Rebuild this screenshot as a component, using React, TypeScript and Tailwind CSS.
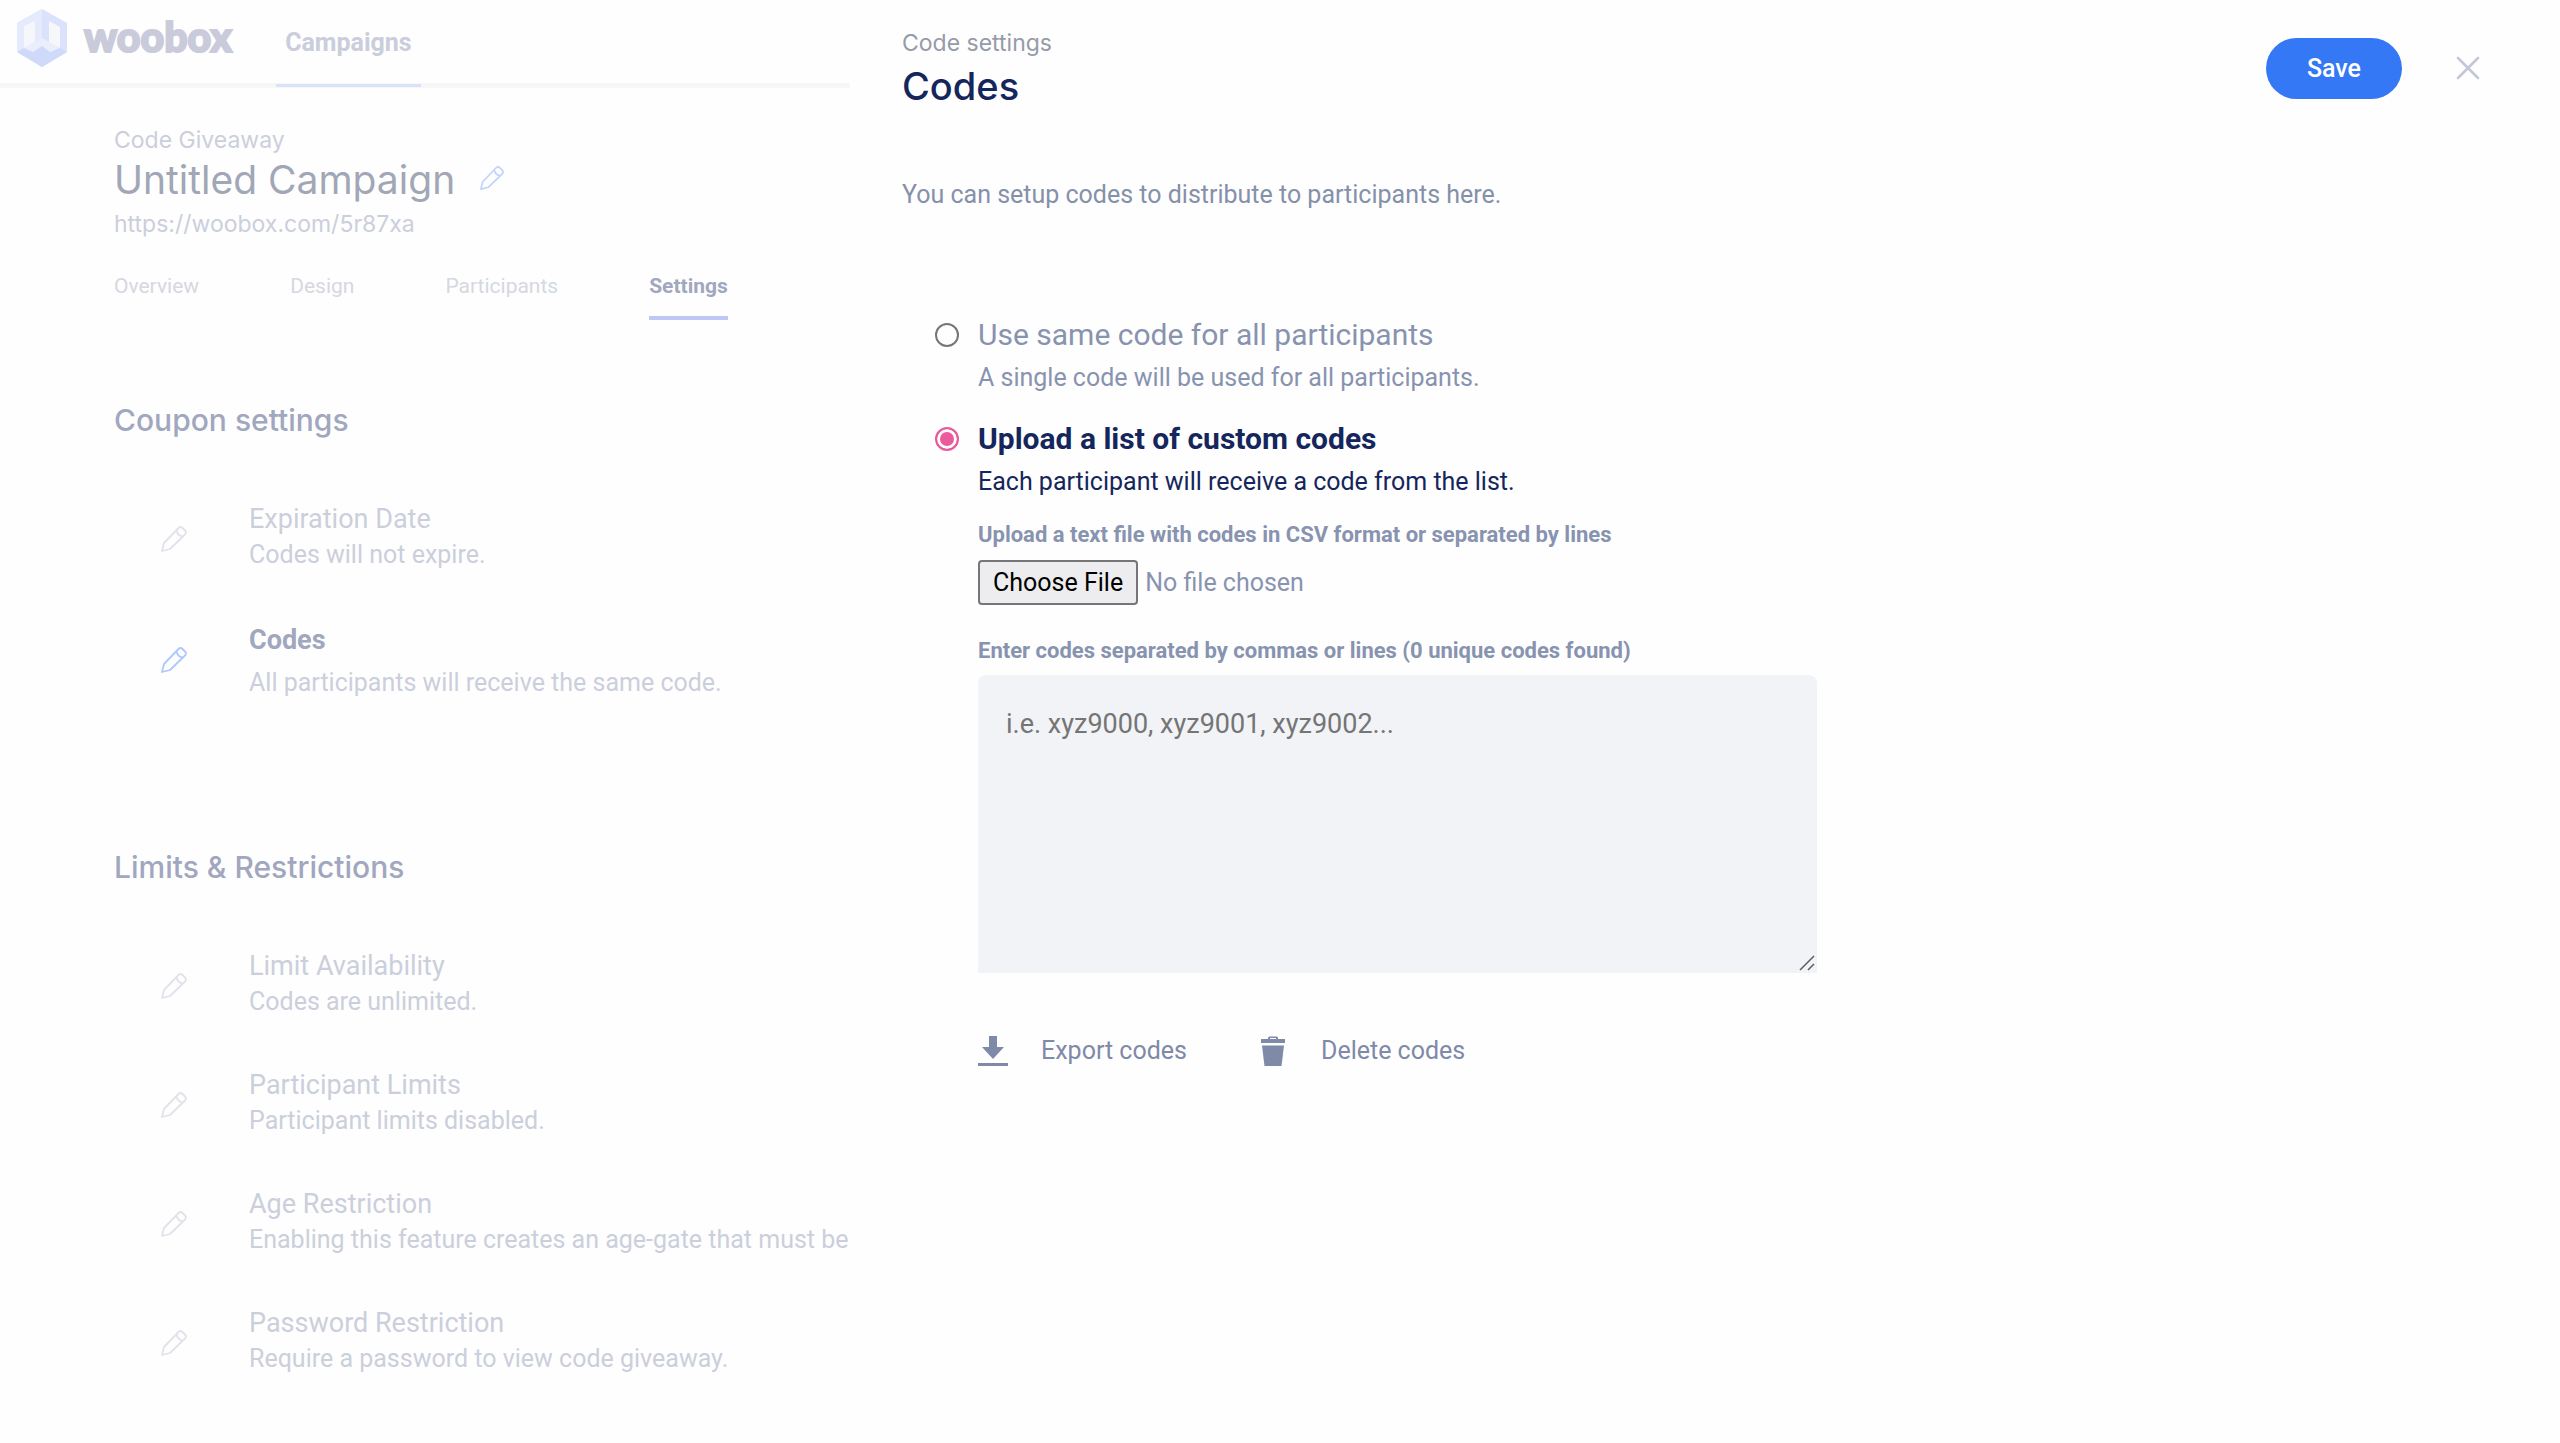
import { useState } from "react";

type Setting = { title: string; text: string; active?: boolean };

const display = "font-['Inter','Liberation_Sans',sans-serif]";

function Pencil({ className }: { className: string }) {
  return (
    <svg viewBox="0 0 28 28" fill="none" stroke="currentColor" strokeWidth="1.8" strokeLinejoin="round" className={className}>
      <path d="M2 26 L4 18 L18.500 3 Q20.500 1 22.500 3 L25 5.500 Q27 7.500 25 9.500 L10 24 Z" />
      <path d="M16.500 5.500 Q17.500 10.500 22.500 11.500" />
    </svg>
  );
}

function LogoMark() {
  return (
    <svg viewBox="0 0 50 58" className="h-[58px] w-[50px] shrink-0" aria-hidden="true">
      <path d="M25 0 L50 14 V43 L25 58 L0 43 V14 Z" fill="#dbe2fc" />
      <path d="M25 0 V29 L0 43 V14 Z" fill="#e5eafc" />
      <path d="M0 43 L7 39 L25 36 L43 39 L50 43 L25 58 Z" fill="#cfdafb" />
      <path d="M7 17 L18 12 V33 L7 39 Z M32 12 L43 18 V39 L32 33 Z" fill="#f6f7fb" />
      <path d="M7 39 L25 29 L43 39 L33 43 L25 37 L16 43 Z" fill="#ebeefb" />
    </svg>
  );
}

function SettingRow({ title, text, active }: Setting) {
  return (
    <li className="flex h-[119px] items-center">
      <button type="button" aria-label={"Edit " + title} className={active ? "pt-1 text-[#adc8fd]" : "text-[#e1e2ea]"}>
        <Pencil className="size-7" />
      </button>
      <div className={`ml-[61px] min-w-0 whitespace-nowrap ${active ? "pt-1" : "pb-1"}`}>
        <h3 className={active ? "mb-1 text-[27px] leading-[42px] font-bold text-[#a0a7bf]" : "text-[27px] leading-9 text-[#cbcfdc]"}>{title}</h3>
        <p className="text-[25px] leading-9 text-[#cbcfdc]">{text}</p>
      </div>
    </li>
  );
}

function Section({ title, items, className }: { title: string; items: Setting[]; className: string }) {
  return (
    <section className={className}>
      <h2 className={`${display} text-[30px] leading-10 font-medium text-[#a0a7bf]`}>{title}</h2>
      <ul className="mt-[39px] pl-[46px]">
        {items.map((item) => (
          <SettingRow key={item.title} {...item} />
        ))}
      </ul>
    </section>
  );
}

const coupon: Setting[] = [
  { title: "Expiration Date", text: "Codes will not expire." },
  { title: "Codes", text: "All participants will receive the same code.", active: true },
];

const limits: Setting[] = [
  { title: "Limit Availability", text: "Codes are unlimited." },
  { title: "Participant Limits", text: "Participant limits disabled." },
  { title: "Age Restriction", text: "Enabling this feature creates an age-gate that must be" },
  { title: "Password Restriction", text: "Require a password to view code giveaway." },
];

const tabs = ["Overview", "Design", "Participants"];

function Background() {
  return (
    <div className="w-[850px] shrink-0">
      <header className="flex h-[88px] border-b-[5px] border-[#f7f7f8]">
        <a href="#home" className="flex items-start pt-[9px] pl-[17px]">
          <LogoMark />
          <span className="ml-[17px] font-['Lato',sans-serif] text-[41px] leading-[56px] font-black text-[#cacbda] [-webkit-text-stroke:2px_#cacbda]">woobox</span>
        </a>
        <nav className="ml-[44px] h-[87px]">
          <a href="#campaigns" className="block h-[87px] border-b-[3px] border-[#dae1fd] px-[9px] text-[25px] leading-[86px] font-bold text-[#cacddb]">
            Campaigns
          </a>
        </nav>
      </header>
      <main className="pt-[34px] pl-[114px]">
        <p className={`${display} text-[23px] leading-9 text-[#cbcfdc]`}>Code Giveaway</p>
        <div className="flex h-11 items-center">
          <h1 className={`${display} text-[39px] leading-11 text-[#a1a7b6]`}>Untitled Campaign</h1>
          <button type="button" aria-label="Edit campaign name" className="ml-6 pb-1 text-[#c0d2fd]">
            <Pencil className="size-[26px]" />
          </button>
        </div>
        <p className={`${display} mt-1 text-[23px] leading-9 text-[#cbcfdc]`}>https://woobox.com/5r87xa</p>
        <nav className="mt-[22px] flex gap-[91px] text-[21px] leading-11 text-[#d5d8e0]">
          {tabs.map((t) => (
            <a key={t} href={"#" + t.toLowerCase()}>{t}</a>
          ))}
          <a href="#settings" className="h-14 border-b-[4px] border-[#bfc7f6] font-bold text-[#a0a7bf]">Settings</a>
        </nav>
        <Section title="Coupon settings" items={coupon} className="mt-20" />
        <Section title="Limits & Restrictions" items={limits} className="mt-[130px]" />
      </main>
    </div>
  );
}

function Choice({ id, checked, title, text, onChange }: { id: string; checked: boolean; title: string; text: string; onChange: () => void }) {
  return (
    <div className="flex h-[104px]">
      <input
        type="radio"
        name="mode"
        id={id}
        checked={checked}
        onChange={onChange}
        className={`mt-2 size-6 shrink-0 appearance-none rounded-full border-2 ${checked ? "border-[#ea5a9c] bg-[#ea5a9c] shadow-[inset_0_0_0_3px_#fdfdfe]" : "border-[#767676]"}`}
      />
      <label htmlFor={id} className={`ml-[19px] ${checked ? "text-[#15265c]" : "text-[#8893b0]"}`}>
        <span className={`block text-[30px] leading-10 ${checked ? "font-bold" : ""}`}>{title}</span>
        <span className="mt-[5px] block text-[25px] leading-9">{text}</span>
      </label>
    </div>
  );
}

export default function App() {
  const [mode, setMode] = useState("list");
  const [codes, setCodes] = useState("");
  return (
    <div className="flex min-h-screen overflow-hidden bg-[#fefefe] font-['Roboto','Liberation_Sans',sans-serif]">
      <Background />
      <aside className="min-w-0 flex-1 pl-[52px]">
        <header className="flex items-start justify-between pr-20">
          <div className={`${display} pt-[25px]`}>
            <p className="text-[23px] leading-9 text-[#959ba8]">Code settings</p>
            <h2 className="text-[38px] leading-[50px] font-medium text-[#15265c]">Codes</h2>
          </div>
          <div className="flex items-center gap-[54px] pt-[38px]">
            <button type="button" className="h-[61px] rounded-full bg-[#3478f6] px-[41px] text-[25px] font-medium text-white">Save</button>
            <button type="button" aria-label="Close" className="pb-0.5 text-[#c3c7d6]">
              <svg viewBox="0 0 24 24" className="size-6" fill="none" stroke="currentColor" strokeWidth="2.5" strokeLinecap="round">
                <path d="M2 2 L22 22 M22 2 L2 22" />
              </svg>
            </button>
          </div>
        </header>
        <p className="mt-[66px] text-[25px] leading-9 text-[#8590aa]">You can setup codes to distribute to participants here.</p>
        <form className="mt-[102px] max-w-[915px] pl-[33px]" onSubmit={(e) => e.preventDefault()}>
          <Choice id="same" checked={mode === "same"} onChange={() => setMode("same")} title="Use same code for all participants" text="A single code will be used for all participants." />
          <Choice id="list" checked={mode === "list"} onChange={() => setMode("list")} title="Upload a list of custom codes" text="Each participant will receive a code from the list." />
          <div className="pl-[43px]">
            <label htmlFor="file" className="block text-[22px] leading-6 font-bold text-[#8893b0]">Upload a text file with codes in CSV format or separated by lines</label>
            <input
              id="file"
              type="file"
              className="mt-[13px] block text-[25px] leading-9 text-[#8893b0] file:mr-[7px] file:h-[45px] file:rounded-[4px] file:border-2 file:border-solid file:border-[#767676] file:bg-[#ededef] file:px-[13px] file:text-black"
            />
            <label htmlFor="codes" className="mt-[34px] block text-[22px] leading-6 font-bold text-[#8893b0]">Enter codes separated by commas or lines (0 unique codes found)</label>
            <div className="relative mt-3">
              <textarea
                id="codes"
                value={codes}
                onChange={(e) => setCodes(e.target.value)}
                placeholder="i.e. xyz9000, xyz9001, xyz9002..."
                className="block h-[298px] w-full resize-none rounded-t-[8px] bg-[#f1f3f7] px-7 py-[31px] text-[27px] leading-9 text-[#15265c] placeholder:text-[#757575]"
              />
              <svg viewBox="0 0 16 16" className="pointer-events-none absolute right-0.5 bottom-0.5 size-4" fill="none" stroke="#5b5d60" strokeWidth="1.5" aria-hidden="true">
                <path d="M1 15 L15 1 M9 15 L15 9" />
              </svg>
            </div>
            <div className="mt-[58px] flex gap-[74px] text-[25px] leading-10 text-[#7f89a8]">
              <button type="button" className="flex items-center gap-[33px]">
                <svg viewBox="0 0 30 30" className="size-[30px]" fill="currentColor">
                  <path d="M11 0 H19 V11 H26 L15 23 L4 11 H11 Z M0 27 H30 V30 H0 Z" />
                </svg>
                Export codes
              </button>
              <button type="button" className="flex items-center gap-9">
                <svg viewBox="0 0 24 30" className="h-[30px] w-6" fill="currentColor">
                  <path fillRule="evenodd" d="M0 3 H7 V2 Q7 0.500 8.500 0.500 H15.500 Q17 0.500 17 2 V3 H24 V7 H0 Z M9 2 V3 H15 V2 Z" />
                  <path d="M1 9.500 H23 L20.500 30 H3.500 Z" />
                </svg>
                Delete codes
              </button>
            </div>
          </div>
        </form>
      </aside>
    </div>
  );
}
